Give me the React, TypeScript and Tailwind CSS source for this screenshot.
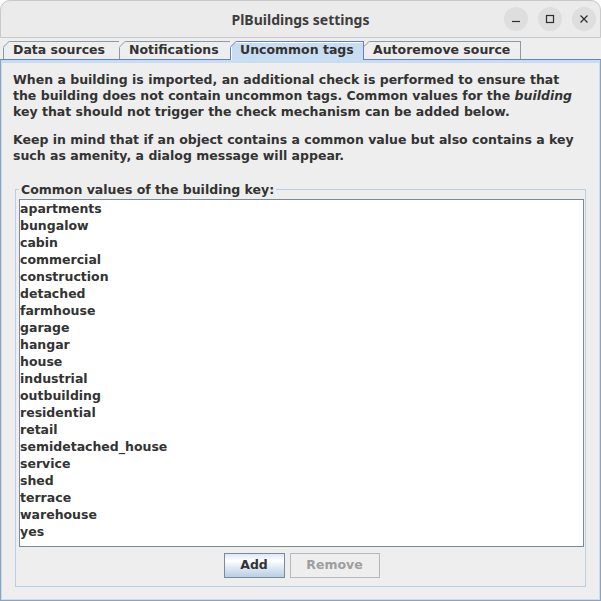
import clsx from "clsx";

const values = [
  "apartments",
  "bungalow",
  "cabin",
  "commercial",
  "construction",
  "detached",
  "farmhouse",
  "garage",
  "hangar",
  "house",
  "industrial",
  "outbuilding",
  "residential",
  "retail",
  "semidetached_house",
  "service",
  "shed",
  "terrace",
  "warehouse",
  "yes",
];

function Tab({ label, width, selected }: { label: string; width: string; selected?: boolean }) {
  return (
    <div
      className={clsx(
        "relative -ml-px border-l border-r border-t pl-[9px] leading-[16px] whitespace-nowrap",
        width,
        selected
          ? "z-10 h-[19px] border-[#6382bf] bg-[#c8ddf2] shadow-[inset_1px_1px_0_#ffffff]"
          : "h-[18px] border-[#8c9aa8] bg-[#eeeeee]"
      )}
    >
      <svg className="absolute -left-px -top-px" width="7" height="7" viewBox="0 0 7 7">
        <polygon points="0,0 7,0 0,7" fill="#eeeeee" />
        <line x1="0" y1="6.5" x2="6.5" y2="0" stroke={selected ? "#6382bf" : "#8c9aa8"} strokeWidth="1" />
      </svg>
      {label}
    </div>
  );
}

function WindowButton({ children }: { children: React.ReactNode }) {
  return (
    <div className="flex h-[24px] w-[24px] items-center justify-center rounded-full bg-[#dedede]">
      <svg width="10" height="10" viewBox="0 0 10 10" fill="none" stroke="#2e2e2e" strokeWidth="1.2">
        {children}
      </svg>
    </div>
  );
}

export default function App() {
  return (
    <div className="h-[601px] w-[601px] overflow-hidden bg-white font-['DejaVu_Sans',sans-serif] text-[12.5px] font-bold text-[#333333]">
      <div className="flex h-full flex-col rounded-t-[10px] bg-[#eeeeee]">
        {/* title bar */}
        <div className="flex h-[38px] shrink-0 items-center rounded-t-[10px] border border-b border-[#c9c9c9] bg-[#ebebeb]">
          <div className="w-[98px]" />
          <div className="flex-1 text-center font-['Noto_Sans',sans-serif] text-[14px] font-bold text-[#3d3d3d]">
            PlBuildings settings
          </div>
          <div className="flex w-[98px] items-center gap-[10px] pl-[2px]">
            <WindowButton>
              <line x1="1" y1="7.5" x2="9" y2="7.5" />
            </WindowButton>
            <WindowButton>
              <rect x="1.5" y="1.5" width="7" height="7" />
            </WindowButton>
            <WindowButton>
              <path d="M1.5 1.5 L8.5 8.5 M8.5 1.5 L1.5 8.5" />
            </WindowButton>
          </div>
        </div>

        {/* tabs */}
        <div className="mt-[3px] flex h-[18px] shrink-0 items-start pl-[4px]">
          <Tab label="Data sources" width="w-[117px]" />
          <Tab label="Notifications" width="w-[112px]" />
          <Tab label="Uncommon tags" width="w-[134px]" selected />
          <Tab label="Autoremove source" width="w-[158px]" />
        </div>

        {/* content */}
        <div className="flex-1 border border-[#8fa3b8] border-t-[#6382bf] bg-[#c8ddf2] px-px pb-px pt-[3px]">
          <div className="h-full bg-[#eeeeee] pt-[9px]">
            <div className="pl-[11px] leading-[16px] whitespace-nowrap">
              <p>
                When a building is imported, an additional check is performed to ensure that
                <br />
                the building does not contain uncommon tags. Common values for the <i>building</i>
                <br />
                key that should not trigger the check mechanism can be added below.
              </p>
              <p className="mt-[12px]">
                Keep in mind that if an object contains a common value but also contains a key
                <br />
                such as amenity, a dialog message will appear.
              </p>
            </div>

            <fieldset className="ml-[13px] mt-[18px] w-[571px] border border-[#b8cfe5] pb-[8px] pl-[3px] pr-px pt-[2px]">
              <legend className="px-[2px] leading-[15px]">Common values of the building key:</legend>
              <div className="h-[348px] border border-[#7a8a99] bg-white">
                {values.map((v) => (
                  <div key={v} className="h-[17px] leading-[17px]">
                    {v}
                  </div>
                ))}
              </div>
              <div className="mt-[6px] flex justify-center gap-[5px]">
                <button className="h-[25px] w-[61px] border border-[#7a8a99] bg-[linear-gradient(to_bottom,#dde8f3_0%,#ffffff_30%,#dde8f3_60%,#b8cfe5_100%)] font-bold">
                  Add
                </button>
                <button className="h-[25px] w-[90px] border border-[#b8b8b8] bg-[#eeeeee] font-bold text-[#9e9e9e]">
                  Remove
                </button>
              </div>
            </fieldset>
          </div>
        </div>
      </div>
    </div>
  );
}
